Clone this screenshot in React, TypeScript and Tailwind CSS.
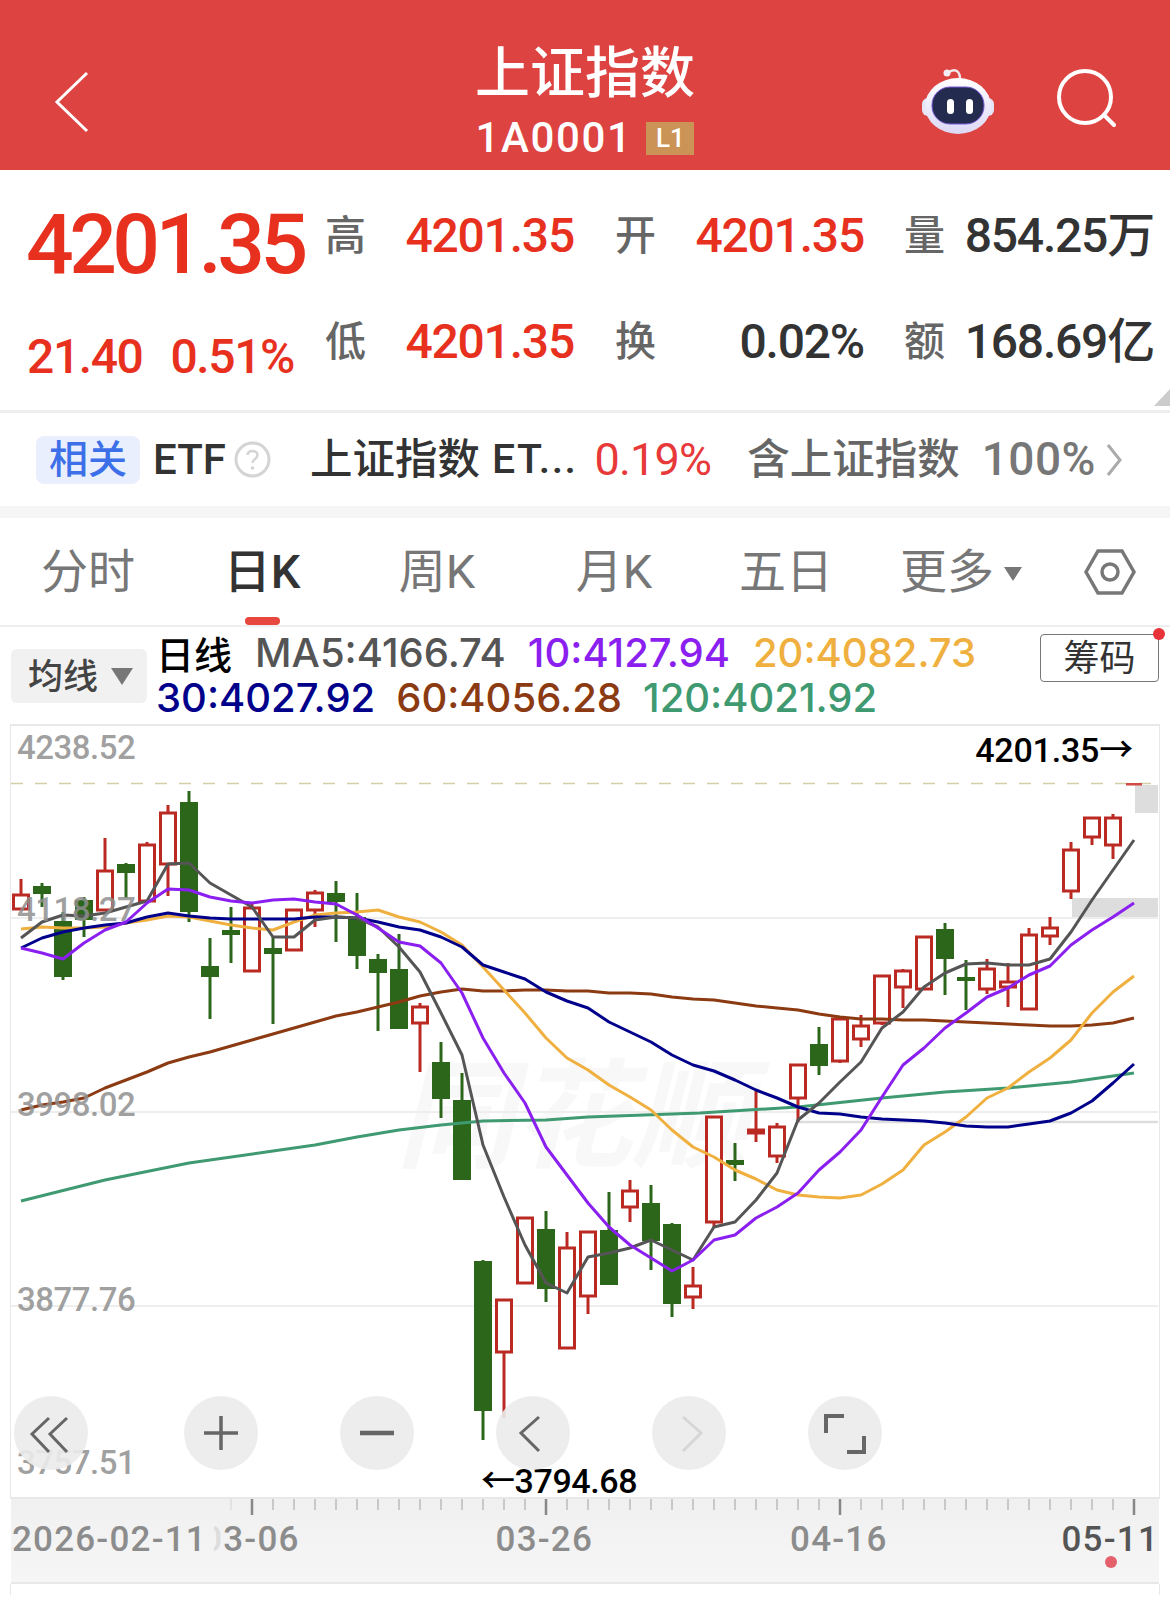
import React from "react";

// [wick top, body top, body bottom, wick bottom], page-pixel y values, one per trading day
const candles: { up: boolean; y: number[] }[] = [
  { up: true, y: [879, 895, 909, 909] },
  { up: false, y: [883, 886, 894, 907] },
  { up: false, y: [912, 921, 977, 980] },
  { up: false, y: [897, 900, 920, 937] },
  { up: true, y: [838, 871, 910, 910] },
  { up: false, y: [863, 864, 873, 898] },
  { up: true, y: [842, 845, 901, 901] },
  { up: true, y: [805, 813, 864, 896] },
  { up: false, y: [791, 802, 912, 922] },
  { up: false, y: [938, 966, 977, 1019] },
  { up: false, y: [907, 930, 935, 963] },
  { up: true, y: [902, 908, 971, 971] },
  { up: false, y: [937, 948, 954, 1024] },
  { up: true, y: [910, 910, 950, 950] },
  { up: true, y: [890, 893, 910, 927] },
  { up: false, y: [881, 893, 902, 942] },
  { up: false, y: [893, 917, 956, 969] },
  { up: false, y: [954, 959, 973, 1031] },
  { up: false, y: [934, 969, 1029, 1029] },
  { up: true, y: [1003, 1007, 1023, 1072] },
  { up: false, y: [1042, 1062, 1099, 1118] },
  { up: false, y: [1073, 1100, 1180, 1180] },
  { up: false, y: [1260, 1261, 1411, 1440] },
  { up: true, y: [1300, 1300, 1352, 1418] },
  { up: true, y: [1218, 1218, 1283, 1283] },
  { up: false, y: [1211, 1229, 1289, 1302] },
  { up: true, y: [1232, 1248, 1348, 1348] },
  { up: true, y: [1232, 1232, 1296, 1314] },
  { up: false, y: [1192, 1230, 1285, 1285] },
  { up: true, y: [1180, 1191, 1207, 1222] },
  { up: false, y: [1185, 1203, 1241, 1270] },
  { up: false, y: [1223, 1224, 1304, 1317] },
  { up: true, y: [1267, 1286, 1297, 1309] },
  { up: true, y: [1117, 1117, 1222, 1227] },
  { up: false, y: [1143, 1160, 1165, 1181] },
  { up: true, y: [1091, 1130, 1133, 1142] },
  { up: true, y: [1123, 1127, 1156, 1163] },
  { up: true, y: [1065, 1065, 1098, 1122] },
  { up: false, y: [1027, 1044, 1066, 1075] },
  { up: true, y: [1019, 1019, 1061, 1063] },
  { up: true, y: [1015, 1026, 1039, 1047] },
  { up: true, y: [976, 976, 1023, 1025] },
  { up: true, y: [969, 971, 987, 1008] },
  { up: true, y: [937, 937, 989, 989] },
  { up: false, y: [923, 929, 959, 995] },
  { up: false, y: [960, 977, 981, 1010] },
  { up: true, y: [959, 969, 989, 994] },
  { up: true, y: [963, 982, 987, 1007] },
  { up: true, y: [928, 935, 1009, 1009] },
  { up: true, y: [917, 928, 936, 945] },
  { up: true, y: [842, 850, 891, 899] },
  { up: true, y: [818, 818, 837, 845] },
  { up: true, y: [814, 818, 845, 859] },
];

const ma5 = [938, 922, 915, 916, 913, 907, 901, 864, 863, 883, 895, 907, 937, 937, 920, 917, 918, 927, 947, 972, 1013, 1055, 1145, 1197, 1245, 1283, 1293, 1257, 1253, 1248, 1240, 1250, 1260, 1227, 1222, 1200, 1173, 1120, 1103, 1082, 1062, 1028, 1012, 987, 973, 964, 963, 965, 965, 959, 932, 900, 870, 840];
const ma10 = [948, 953, 959, 943, 930, 922, 903, 889, 890, 897, 901, 903, 900, 899, 902, 904, 915, 928, 942, 946, 963, 993, 1038, 1073, 1103, 1147, 1175, 1203, 1227, 1245, 1258, 1271, 1260, 1240, 1235, 1218, 1207, 1193, 1170, 1152, 1130, 1097, 1065, 1048, 1028, 1013, 997, 988, 975, 966, 945, 930, 917, 903];
const ma20 = [929, 927, 928, 928, 927, 923, 920, 916, 917, 921, 925, 928, 930, 922, 915, 913, 912, 910, 917, 922, 932, 945, 967, 990, 1013, 1038, 1058, 1070, 1085, 1097, 1110, 1130, 1147, 1157, 1170, 1179, 1190, 1195, 1197, 1198, 1195, 1184, 1170, 1145, 1132, 1117, 1098, 1088, 1072, 1058, 1040, 1013, 992, 976];
const ma30 = [948, 938, 932, 928, 925, 923, 917, 913, 916, 918, 919, 919, 919, 919, 917, 917, 918, 922, 927, 930, 937, 947, 965, 972, 979, 992, 1001, 1008, 1022, 1032, 1042, 1055, 1065, 1071, 1080, 1090, 1098, 1107, 1113, 1114, 1117, 1119, 1120, 1121, 1123, 1126, 1127, 1127, 1124, 1121, 1113, 1101, 1083, 1064];
const ma60 = [1110, 1105, 1102, 1098, 1088, 1080, 1072, 1063, 1057, 1052, 1046, 1040, 1034, 1028, 1022, 1016, 1012, 1007, 1002, 996, 992, 989, 991, 991, 990, 990, 991, 991, 993, 993, 994, 997, 999, 1000, 1003, 1006, 1008, 1010, 1014, 1017, 1019, 1019, 1020, 1020, 1021, 1022, 1023, 1024, 1025, 1026, 1026, 1025, 1023, 1018];
const ma120 = "21,1201 105,1180 189,1163 273,1151 315,1145 357,1137 399,1130 441,1125 483,1121 546,1120 588,1117 700,1113 798,1107 882,1098 945,1092 1008,1088 1071,1082 1134,1073";

const toPoints = (ys: number[]) => ys.map((y, i) => `${21 + 21 * i},${y}`).join(" ");

const ticks = Array.from({ length: 44 }, (_, i) => i + 10);

const tabs = [
  { name: "分时", width: "w-[176px]" },
  { name: "日K", width: "w-[178px]", active: true },
  { name: "周K", width: "w-[166px]" },
  { name: "月K", width: "w-[188px]" },
  { name: "五日", width: "w-[156px]" },
];

const Quote = ({ label, value, dark, width }: { label: string; value: string; dark?: boolean; width: string }) => (
  <div className={`${width} flex items-center justify-between`}>
    <span className="text-[41px] leading-[50px] font-medium text-[#666]">{label}</span>
    <span className={`text-[48px] leading-[50px] font-medium tracking-[-1.2px] ${dark ? "text-[#333]" : "text-[#e8301f]"}`}>{value}</span>
  </div>
);

const CircleButton = ({ children, className = "" }: { children: React.ReactNode; className?: string }) => (
  <div className={`w-[74px] h-[74px] rounded-full bg-[#ebebeb]/90 ${className}`}>
    <svg width="74" height="74" viewBox="0 0 74 74" fill="none" strokeWidth="3.5">
      {children}
    </svg>
  </div>
);

const axisLabel = "text-[35px] leading-[40px] font-medium tracking-[1.2px] whitespace-nowrap text-[#8c8c8c]";
const priceLabel = "absolute left-[6px] text-[33px] leading-[34px] font-medium tracking-[-0.5px] text-[#8f8f8f]/85";

export default function App() {
  return (
    <div className="w-[1170px] h-[1597px] overflow-hidden bg-white font-[Roboto,'Noto_Sans_CJK_SC',sans-serif]">
      {/* Title bar */}
      <header className="h-[170px] bg-[#dd4341] flex items-center justify-between relative text-white">
        <svg className="ml-[52px] mt-[33px]" width="40" height="64" viewBox="0 0 40 64" fill="none" stroke="#fff" strokeWidth="3">
          <path d="M35 3 L5 32 L35 61" />
        </svg>
        <div className="absolute left-0 right-0 top-[41px] flex flex-col items-center">
          <div className="text-[55px] leading-[64px] font-medium">上证指数</div>
          <div className="flex items-center gap-[14px] mt-[10px] ml-[0px]">
            <span className="text-[42px] leading-[46px] font-medium tracking-[1.6px]">1A0001</span>
            <span className="w-[48px] h-[33px] bg-[#cc9356] text-[26px] leading-[33px] text-center font-medium">L1</span>
          </div>
        </div>
        <div className="flex items-center mr-[50px] mt-[30px] gap-[60px]">
          {/* Robot */}
          <svg width="76" height="68" viewBox="0 0 76 68">
            <defs>
              <linearGradient id="shell" x1="0" y1="0" x2="0" y2="1">
                <stop offset="0" stopColor="#ffffff" />
                <stop offset="1" stopColor="#dcd8f5" />
              </linearGradient>
            </defs>
            <path d="M29 6 C35 2 40 5 40 13" fill="none" stroke="#f1e6ea" strokeWidth="2.5" />
            <circle cx="27" cy="7" r="3.5" fill="#f4eef2" />
            <rect x="2" y="32" width="72" height="18" rx="6" fill="#e4e6f8" />
            <ellipse cx="38" cy="40" rx="33" ry="28" fill="url(#shell)" />
            <rect x="12" y="21" width="52" height="37" rx="18" fill="#232c4e" stroke="#7a5ad8" strokeWidth="1" />
            <rect x="27" y="33" width="7" height="15" rx="3.5" fill="#fff" />
            <rect x="46" y="33" width="7" height="15" rx="3.5" fill="#fff" />
          </svg>
          <svg width="64" height="64" viewBox="0 0 64 64" fill="none" stroke="#fff" strokeWidth="4" strokeLinecap="round">
            <circle cx="29" cy="29" r="26" />
            <path d="M48 47 L58 57" />
          </svg>
        </div>
      </header>

      {/* Quote block */}
      <section className="h-[243px] border-b-[3px] border-[#eeeeee] flex relative">
        <div className="w-[325px] pl-[27px] pt-[33px]">
          <div className="text-[84px] leading-[84px] font-medium tracking-[-4.6px] -ml-[1px] text-[#e8301f]">4201.35</div>
          <div className="mt-[46px] flex gap-[28px] text-[48px] leading-[48px] font-medium tracking-[-1.4px] text-[#e8301f]">
            <span>21.40</span>
            <span>0.51%</span>
          </div>
        </div>
        <div className="pt-[41px] flex flex-col gap-[56px]">
          <div className="flex">
            <div className="w-[290px] pr-[41px]"><Quote label="高" value="4201.35" width="w-[249px]" /></div>
            <div className="w-[289px] pr-[40px]"><Quote label="开" value="4201.35" width="w-[249px]" /></div>
            <Quote label="量" value="854.25万" dark width="w-[250px]" />
          </div>
          <div className="flex">
            <div className="w-[290px] pr-[41px]"><Quote label="低" value="4201.35" width="w-[249px]" /></div>
            <div className="w-[289px] pr-[40px]"><Quote label="换" value="0.02%" dark width="w-[249px]" /></div>
            <Quote label="额" value="168.69亿" dark width="w-[250px]" />
          </div>
        </div>
        <svg className="absolute right-0 bottom-[4px]" width="16" height="17" viewBox="0 0 16 17">
          <path d="M16 0 V17 H0 Z" fill="#cccccc" />
        </svg>
      </section>

      {/* Related ETF row */}
      <section className="h-[93px] flex items-center">
        <span className="ml-[36px] w-[104px] h-[48px] rounded-[8px] bg-[#e9effc] text-[39px] leading-[48px] text-center text-[#3d6fe8] font-medium">相关</span>
        <span className="ml-[13px] text-[42px] font-medium text-[#333]">ETF</span>
        <svg className="ml-[8px]" width="37" height="37" viewBox="0 0 37 37" fill="none">
          <circle cx="18.5" cy="18.5" r="16.5" stroke="#d4d4d4" strokeWidth="3" />
          <path d="M13.5 14 C14 8.5 23.5 8.5 23.5 14 C23.5 18 18.5 18 18.5 22" stroke="#d4d4d4" strokeWidth="2.5" />
          <circle cx="18.5" cy="27" r="1.8" fill="#d4d4d4" />
        </svg>
        <span className="ml-[39px] text-[42.5px] text-[#333] font-medium">上证指数</span>
        <span className="ml-[12px] text-[41px] text-[#333] font-medium tracking-[1.5px]">ET...</span>
        <span className="ml-[17px] text-[45px] text-[#e8393a] tracking-[-0.8px]">0.19%</span>
        <span className="ml-[36px] text-[42.5px] text-[#666] font-medium">含上证指数</span>
        <span className="ml-[22px] text-[46px] text-[#777] font-medium tracking-[0.5px]">100%</span>
        <svg className="ml-[9px]" width="18" height="36" viewBox="0 0 18 36" fill="none" stroke="#aaaaaa" strokeWidth="3">
          <path d="M3 3 L15 18 L3 33" />
        </svg>
      </section>
      <div className="h-[12px] bg-[#f5f5f5]" />

      {/* Period tabs */}
      <nav className="h-[109px] border-b-[2px] border-[#eeeeee] flex items-center relative">
        {tabs.map((tab) => (
          <div
            key={tab.name}
            className={`${tab.width} text-center text-[47px] leading-[60px] ${tab.active ? "text-[#333] font-medium pr-[6px]" : "text-[#777]"}`}
          >
            {tab.name}
          </div>
        ))}
        <div className="ml-[36px] text-[47px] leading-[60px] text-[#777]">更多</div>
        <svg className="ml-[10px] mt-[4px]" width="18" height="14" viewBox="0 0 18 14">
          <path d="M0 0 H18 L9 14 Z" fill="#777777" />
        </svg>
        <svg className="ml-[62px]" width="52" height="48" viewBox="0 0 52 48" fill="none" stroke="#777777" strokeWidth="3.5">
          <path d="M14 3 H38 L50 24 L38 45 H14 L2 24 Z" />
          <circle cx="26" cy="24" r="8" />
        </svg>
        <div className="absolute left-[245px] bottom-0 w-[35px] h-[8px] rounded-full bg-[#e8473f]" />
      </nav>

      {/* MA legend */}
      <section className="h-[97px] flex items-start">
        <div className="ml-[11px] mt-[22px] w-[136px] h-[54px] rounded-[6px] bg-[#f1f1f1] flex items-center">
          <span className="ml-[17px] text-[35px] leading-[54px] mt-[4px] font-medium text-[#444]">均线</span>
          <svg className="ml-[13px]" width="22" height="17" viewBox="0 0 22 17">
            <path d="M0 0 H22 L11 17 Z" fill="#777777" />
          </svg>
        </div>
        <div className="ml-[9px] pt-[3px] font-[Inter,sans-serif] font-medium text-[40px] leading-[45px] whitespace-nowrap">
          <div className="flex">
            <span className="text-[38px] text-black font-['Noto_Sans_CJK_SC',sans-serif]">日线</span>
            <span className="ml-[23px] text-[#555]">MA5:4166.74</span>
            <span className="ml-[22px] text-[#8a1ff0]">10:4127.94</span>
            <span className="ml-[23px] text-[#f0b040]">20:4082.73</span>
          </div>
          <div className="flex">
            <span className="text-[#00008b]">30:4027.92</span>
            <span className="ml-[21px] text-[#8b3a12]">60:4056.28</span>
            <span className="ml-[21px] text-[#3f9a72]">120:4021.92</span>
          </div>
        </div>
        <div className="ml-auto mr-[11px] mt-[7px] w-[119px] h-[48px] rounded-[4px] border-[1.5px] border-[#777] text-[36px] leading-[48px] text-center text-[#333] relative">
          筹码
          <div className="absolute -right-[7px] -top-[7px] w-[12px] h-[12px] rounded-full bg-[#e8333a]" />
        </div>
      </section>

      {/* K line chart */}
      <section className="mx-[10px] h-[775px] border-x-[1.5px] border-t-[2px] border-b-[2px] border-[#e8e8e8] relative">
        <div className="absolute left-[385px] top-[332px] text-[118px] leading-[120px] font-bold italic text-[#f8f8f8]">同花顺</div>
        <svg className="block relative" width="1147" height="771" viewBox="11 726 1147 771" fill="none">
          <path d="M11 918 H1158 M11 1112 H1158 M11 1306 H1158" stroke="#eeeeee" strokeWidth="2" />
          <path d="M798 1122 H1158" stroke="#dddddd" strokeWidth="2.5" />
          <path d="M11 783.5 H1158" stroke="#d3cfa8" strokeWidth="1.5" strokeDasharray="12 12" />
          <rect x="1135" y="785" width="23" height="28" fill="#dddddd" />
          <rect x="1072" y="898" width="86" height="19" fill="#dddddd" />
          <rect x="1126" y="783" width="16" height="2.5" fill="#d14b45" />
          {candles.map((c, i) => {
            const x = 21 + 21 * i;
            const [top, open, close, bottom] = c.y;
            if (c.up) {
              return (
                <g key={i} stroke="#bb2a22" strokeWidth="3">
                  <path d={`M${x} ${top} V${open} M${x} ${close} V${bottom}`} />
                  <rect x={x - 7.5} y={open} width="15" height={close - open} fill="#fff" />
                </g>
              );
            }
            return (
              <g key={i} fill="#2b661a" stroke="#2b661a">
                <path d={`M${x} ${top} V${bottom}`} strokeWidth="3" />
                <rect x={x - 9} y={open} width="18" height={close - open} stroke="none" />
              </g>
            );
          })}
          <g strokeWidth="3" strokeLinejoin="round">
            <polyline points={ma120} stroke="#3f9a72" />
            <polyline points={toPoints(ma60)} stroke="#8b3a12" />
            <polyline points={toPoints(ma20)} stroke="#f0b040" />
            <polyline points={toPoints(ma30)} stroke="#00008b" />
            <polyline points={toPoints(ma5)} stroke="#555555" />
            <polyline points={toPoints(ma10)} stroke="#8a1ff0" />
          </g>
        </svg>
        <div className={`${priceLabel} top-[5px]`}>4238.52</div>
        <div className={`${priceLabel} top-[167px]`}>4118.27</div>
        <div className={`${priceLabel} top-[362px]`}>3998.02</div>
        <div className={`${priceLabel} top-[557px]`}>3877.76</div>
        <div className={`${priceLabel} top-[720px]`}>3757.51</div>
        <div className="absolute right-[26px] top-[7px] text-[34px] leading-[34px] font-medium tracking-[-0.2px] text-black">4201.35→</div>
        <div className="absolute left-[470px] top-[738px] text-[34px] leading-[34px] font-medium tracking-[-0.4px] text-black">←3794.68</div>

        {/* Chart controls */}
        <div className="absolute left-[3px] top-[670px] flex gap-[82px]">
          <CircleButton className="mr-[14px]">
            <path d="M35 22 L18 38 L35 56 M53 22 L36 38 L53 56" stroke="#666666" strokeWidth="3" />
          </CircleButton>
          <CircleButton>
            <path d="M37 20 V54 M20 37 H54" stroke="#666666" />
          </CircleButton>
          <CircleButton>
            <path d="M20 37 H54" stroke="#666666" strokeWidth="4.5" />
          </CircleButton>
          <CircleButton>
            <path d="M43 21 L25 37 L43 55" stroke="#666666" strokeWidth="3" />
          </CircleButton>
          <CircleButton>
            <path d="M31 21 L49 37 L31 55" stroke="#d6d6d6" strokeWidth="3" />
          </CircleButton>
          <CircleButton>
            <path d="M36 20 H18 V37 M39 56 H56 V40" stroke="#666666" strokeWidth="4" />
          </CircleButton>
        </div>
      </section>

      {/* Date axis */}
      <section className="ml-[11px] mr-[11px] h-[85px] bg-gradient-to-b from-[#f0f0f0] to-[#f6f6f6] border-b-[2px] border-[#e8e8e8] relative">
        <svg className="block" width="1148" height="16" viewBox="11 1499 1148 16" strokeWidth="2">
          {ticks.map((i) => {
            const major = (i - 11) % 14 === 0;
            return (
              <path
                key={i}
                d={`M${21 + 21 * i} 1499 V${major ? 1515 : 1510}`}
                stroke={major ? "#888888" : i === 10 ? "#dddddd" : "#bbbbbb"}
                strokeWidth={major ? 2.5 : 1.5}
              />
            );
          })}
        </svg>
        <div className="mt-[5px] flex">
          <span className={`${axisLabel} ml-[1px]`}>2026-02-11</span>
          {/* the first digit slides under the left label, only its edge shows */}
          <span className={`${axisLabel} ml-[7px] w-[88px] flex justify-end overflow-hidden`}>
            <span className="text-[#dddddd]">0</span>3-06
          </span>
          <span className={`${axisLabel} ml-[196px]`}>03-26</span>
          <span className={`${axisLabel} ml-[197px]`}>04-16</span>
          <span className={`${axisLabel} ml-[174px] text-[#555]`}>05-11</span>
        </div>
        <div className="absolute right-[42px] bottom-[14px] w-[12px] h-[12px] rounded-full bg-[#e4606a]" />
      </section>
      <div className="mx-[10px] h-[11px] border-x-[1.5px] border-[#e8e8e8]" />
    </div>
  );
}
